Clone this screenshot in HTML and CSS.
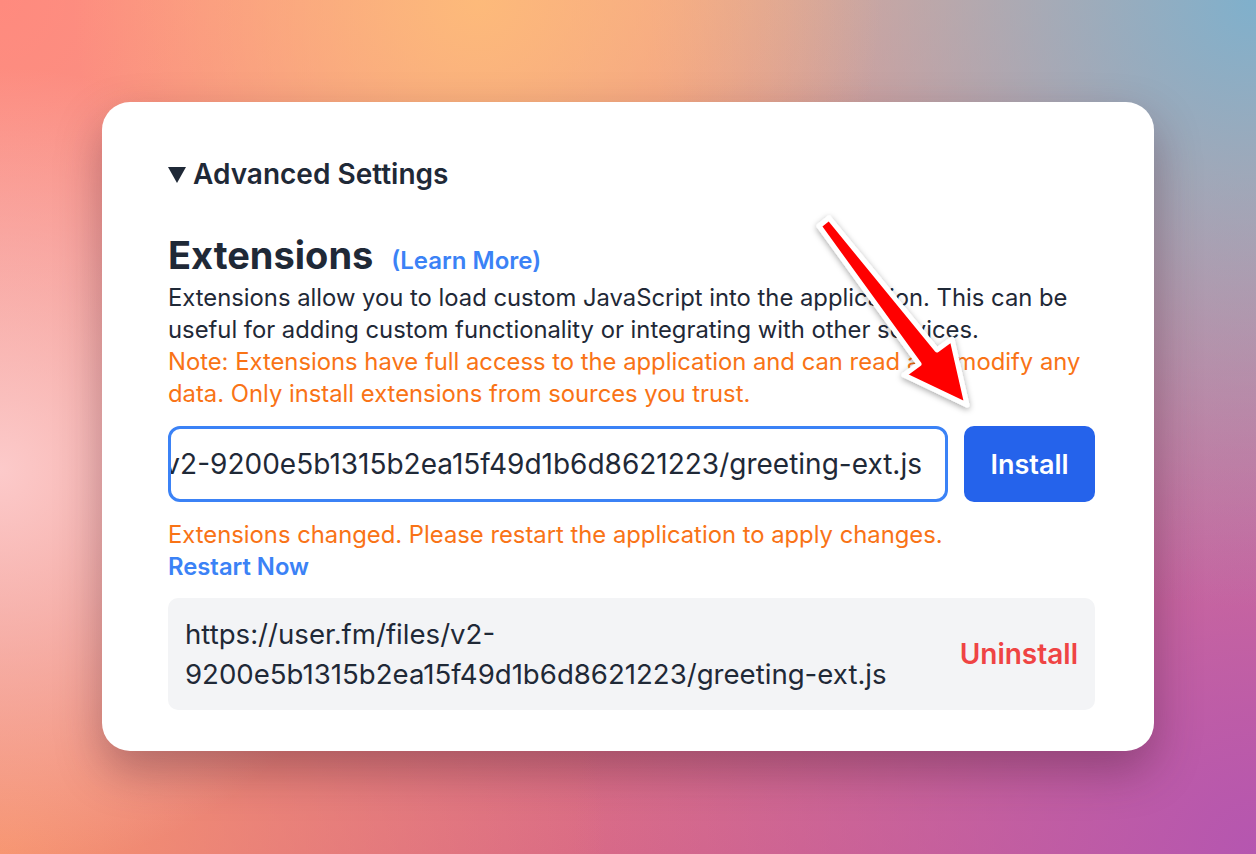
FILE: index.html
```html
<!DOCTYPE html>
<html lang="en">
<head>
    <meta charset="UTF-8">
    <meta name="viewport" content="width=device-width, initial-scale=1.0">
    <title>Extensions</title>
    <link rel="stylesheet" href="styles.css">
</head>
<body>
    <div class="card">
        <div class="summary">
            <svg class="caret" width="18" height="16" viewBox="0 0 18 16"><path d="M0 0 H18 L9 16 Z" fill="#1f2937"/></svg>
            <span>Advanced Settings</span>
        </div>
        <div class="title-row">
            <h1>Extensions</h1>
            <a class="learn">(Learn More)</a>
        </div>
        <p class="desc">Extensions allow you to load custom JavaScript into the application. This can be useful for adding custom functionality or integrating with other services.</p>
        <p class="note">Note: Extensions have full access to the application and can read and modify any data. Only install extensions from sources you trust.</p>
        <div class="install-row">
            <div class="url-input"><span>https://user.fm/files/v2-9200e5b1315b2ea15f49d1b6d8621223/greeting-ext.js</span></div>
            <button class="install-btn">Install</button>
        </div>
        <p class="changed">Extensions changed. Please restart the application to apply changes.</p>
        <a class="restart">Restart Now</a>
        <div class="ext-item">
            <div class="ext-url">https://user.fm/files/v2-<br>9200e5b1315b2ea15f49d1b6d8621223/greeting-ext.js</div>
            <a class="uninstall">Uninstall</a>
        </div>
    </div>

    <!-- annotation arrow drawn over the card -->
    <svg class="arrow" width="1256" height="854" viewBox="0 0 1256 854">
        <defs>
            <filter id="shadow" x="-20%" y="-20%" width="140%" height="140%">
                <feDropShadow dx="0" dy="2" stdDeviation="3" flood-color="#000" flood-opacity="0.35"/>
            </filter>
        </defs>
        <polygon points="829,218 937,350 952,339 967,405 904,375 919,364 819,226"
                 fill="#ff0000" stroke="#ffffff" stroke-width="5" stroke-linejoin="round" filter="url(#shadow)"/>
    </svg>
</body>
</html>
```

FILE: styles.css
```css
body {
    margin: 0;
    width: 1256px;
    height: 854px;
    overflow: hidden;
    position: relative;
    box-sizing: border-box;
    padding: 102px 102px 0 102px;
    font-family: Inter, "Noto Sans", sans-serif;
    color: #1f2937;
    background-color: #e98a8a;
    background-image:
        radial-gradient(circle at 38% 0%, #fdba7a 0%, rgba(253,186,122,0) 35%),
        radial-gradient(circle at 100% 0%, #7fb0cc 0%, rgba(127,176,204,0) 40%),
        radial-gradient(circle at 0% 55%, #fccaca 0%, rgba(252,202,202,0) 30%),
        radial-gradient(circle at 100% 100%, #b556b0 0%, rgba(181,86,176,0) 45%),
        radial-gradient(circle at 0% 100%, #f7946e 0%, rgba(247,148,110,0) 40%),
        radial-gradient(circle at 0% 0%, #ff8a7e 0%, rgba(255,138,126,0) 40%),
        linear-gradient(180deg, #f1a08c 0%, #d96a86 100%);
}
.card {
    width: 1052px;
    height: 649px;
    box-sizing: border-box;
    background: #ffffff;
    border-radius: 28px;
    padding: 56px 59px 0 66px;
    box-shadow: 0 20px 45px rgba(60, 20, 40, 0.35);
}
.summary {
    display: flex;
    align-items: center;
    gap: 7px;
    font-size: 28px;
    line-height: 32px;
    font-weight: 600;
}
.caret {
    margin-top: 1px;
}
.title-row {
    display: flex;
    align-items: baseline;
    gap: 18px;
    margin-top: 45px;
}
h1 {
    margin: 0;
    font-size: 38px;
    line-height: 40px;
    font-weight: 700;
}
.learn {
    color: #3b82f6;
    font-size: 24px;
    font-weight: 600;
}
.desc, .note, .changed {
    margin: 0;
    font-size: 23.8px;
    line-height: 32px;
}
.desc {
    margin-top: 7px;
}
.note, .changed {
    color: #f97316;
}
.install-row {
    display: flex;
    gap: 16px;
    margin-top: 16px;
}
.url-input {
    flex: 1;
    height: 76px;
    box-sizing: border-box;
    border: 3px solid #3b82f6;
    border-radius: 12px;
    padding: 0 23px;
    display: flex;
    align-items: center;
    justify-content: flex-end;
    overflow: hidden;
    white-space: nowrap;
    font-size: 28px;
}
.install-btn {
    width: 131px;
    height: 76px;
    border: none;
    border-radius: 10px;
    background: #2563eb;
    color: #ffffff;
    font-family: inherit;
    font-size: 27px;
    font-weight: 600;
}
.changed {
    margin-top: 17px;
}
.restart {
    display: block;
    color: #3b82f6;
    font-size: 23.8px;
    line-height: 32px;
    font-weight: 600;
}
.ext-item {
    margin-top: 15px;
    background: #f3f4f6;
    border-radius: 10px;
    padding: 16px 17px;
    display: flex;
    align-items: center;
    justify-content: space-between;
}
.ext-url {
    font-size: 27.6px;
    line-height: 40px;
}
.uninstall {
    color: #ef4444;
    font-size: 28px;
    font-weight: 600;
}
.arrow {
    position: absolute;
    left: 0;
    top: 0;
    pointer-events: none;
}
```
